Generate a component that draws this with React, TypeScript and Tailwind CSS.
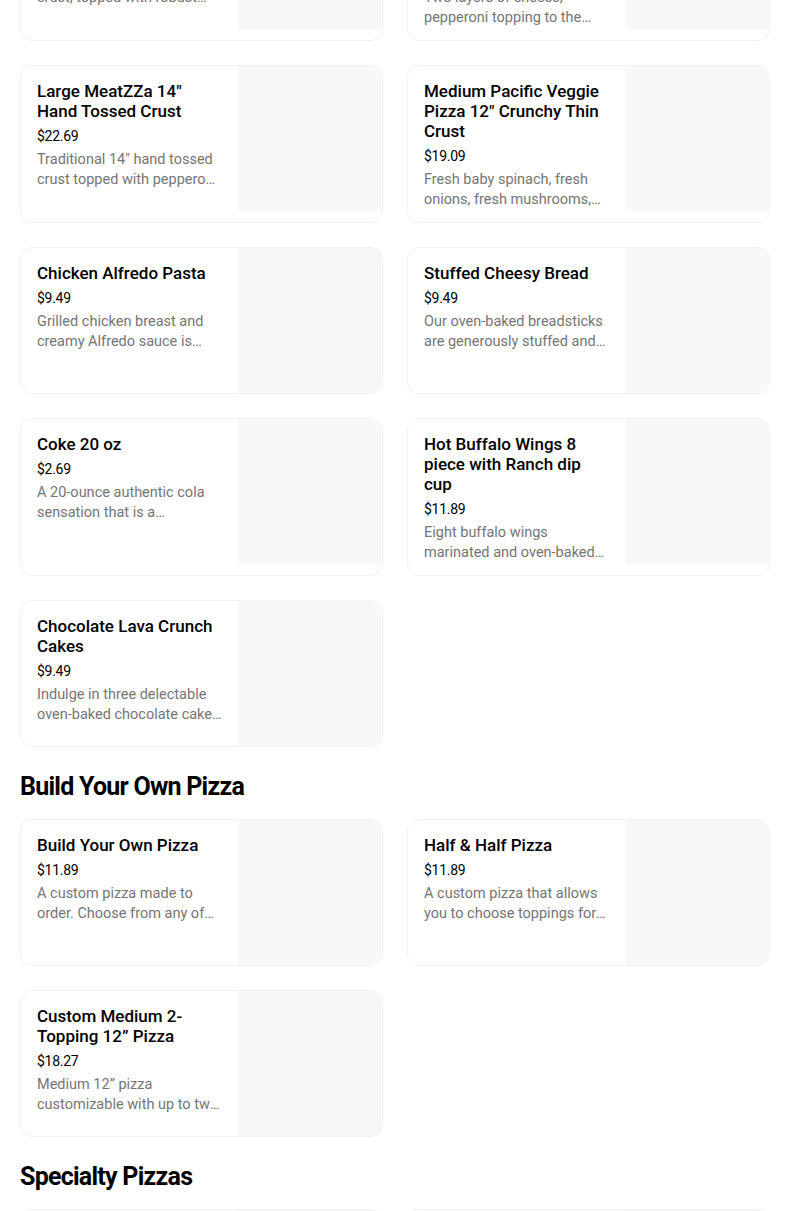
type Item = {
  title: string;
  price: string;
  description: string;
};

const topItems: Item[] = [
  {
    title: 'Large Hand Tossed Cheese Pizza 14"',
    price: "$17.49",
    description: 'Classic 14" hand tossed crust, topped with robust inspired tomato sauce and cheese.',
  },
  {
    title: 'Medium Ultimate Pepperoni Pizza 12" Hand Tossed',
    price: "$18.29",
    description: "Two layers of cheese, pepperoni topping to the edge and a sprinkle of oregano.",
  },
];

const menuItems: Item[] = [
  {
    title: 'Large MeatZZa 14" Hand Tossed Crust',
    price: "$22.69",
    description: 'Traditional 14" hand tossed crust topped with pepperoni, ham, Italian sausage and beef.',
  },
  {
    title: 'Medium Pacific Veggie Pizza 12" Crunchy Thin Crust',
    price: "$19.09",
    description: "Fresh baby spinach, fresh onions, fresh mushrooms, tomatoes and black olives.",
  },
  {
    title: "Chicken Alfredo Pasta",
    price: "$9.49",
    description: "Grilled chicken breast and creamy Alfredo sauce is mixed with penne pasta.",
  },
  {
    title: "Stuffed Cheesy Bread",
    price: "$9.49",
    description: "Our oven-baked breadsticks are generously stuffed and covered with cheese.",
  },
  {
    title: "Coke 20 oz",
    price: "$2.69",
    description: "A 20-ounce authentic cola sensation that is a refreshing part of sharing life.",
  },
  {
    title: "Hot Buffalo Wings 8 piece with Ranch dip cup",
    price: "$11.89",
    description: "Eight buffalo wings marinated and oven-baked to a crispy finish with ranch.",
  },
  {
    title: "Chocolate Lava Crunch Cakes",
    price: "$9.49",
    description: "Indulge in three delectable oven-baked chocolate cakes with a molten center.",
  },
];

const buildItems: Item[] = [
  {
    title: "Build Your Own Pizza",
    price: "$11.89",
    description: "A custom pizza made to order. Choose from any of our crusts and toppings.",
  },
  {
    title: "Half & Half Pizza",
    price: "$11.89",
    description: "A custom pizza that allows you to choose toppings for each half of the pizza.",
  },
  {
    title: "Custom Medium 2-Topping 12\u201d Pizza",
    price: "$18.27",
    description: "Medium 12\u201d pizza customizable with up to two toppings of your choice.",
  },
];

const MenuCard = ({ item }: { item: Item }) => (
  <div className="flex overflow-hidden rounded-xl border border-[#f2f2f2] bg-white">
    <div className="min-w-0 flex-1 px-4 pt-[15px] pb-3">
      <div className="text-[17px] font-medium leading-5 text-black">{item.title}</div>
      <div className="mt-[7px] text-[14px] leading-4 tracking-[-0.02em] text-black">{item.price}</div>
      <div className="mt-[6px] line-clamp-2 text-[14.5px] leading-5 text-[#757575]">
        {item.description}
      </div>
    </div>
    <div className="h-[145px] w-[144px] shrink-0 bg-[#f8f8f8]" />
  </div>
);

const CardGrid = ({ items }: { items: Item[] }) => (
  <div className="grid grid-cols-2 gap-6">
    {items.map((item) => (
      <MenuCard key={item.title} item={item} />
    ))}
  </div>
);

const SectionTitle = ({ children }: { children: string }) => (
  <h2 className="mt-6 mb-4 text-[25px] font-bold leading-8 tracking-[-0.03em] text-black">
    {children}
  </h2>
);

export default function App() {
  return (
    <div className="min-h-screen overflow-hidden bg-white" style={{ fontFamily: "Roboto, 'Noto Sans', sans-serif" }}>
      <div className="-mt-[117px] w-[750px] ml-5 pb-10">
        <div className="mb-6">
          <CardGrid items={topItems} />
        </div>
        <CardGrid items={menuItems} />
        <SectionTitle>Build Your Own Pizza</SectionTitle>
        <CardGrid items={buildItems} />
        <SectionTitle>Specialty Pizzas</SectionTitle>
        <CardGrid items={topItems} />
      </div>
    </div>
  );
}
